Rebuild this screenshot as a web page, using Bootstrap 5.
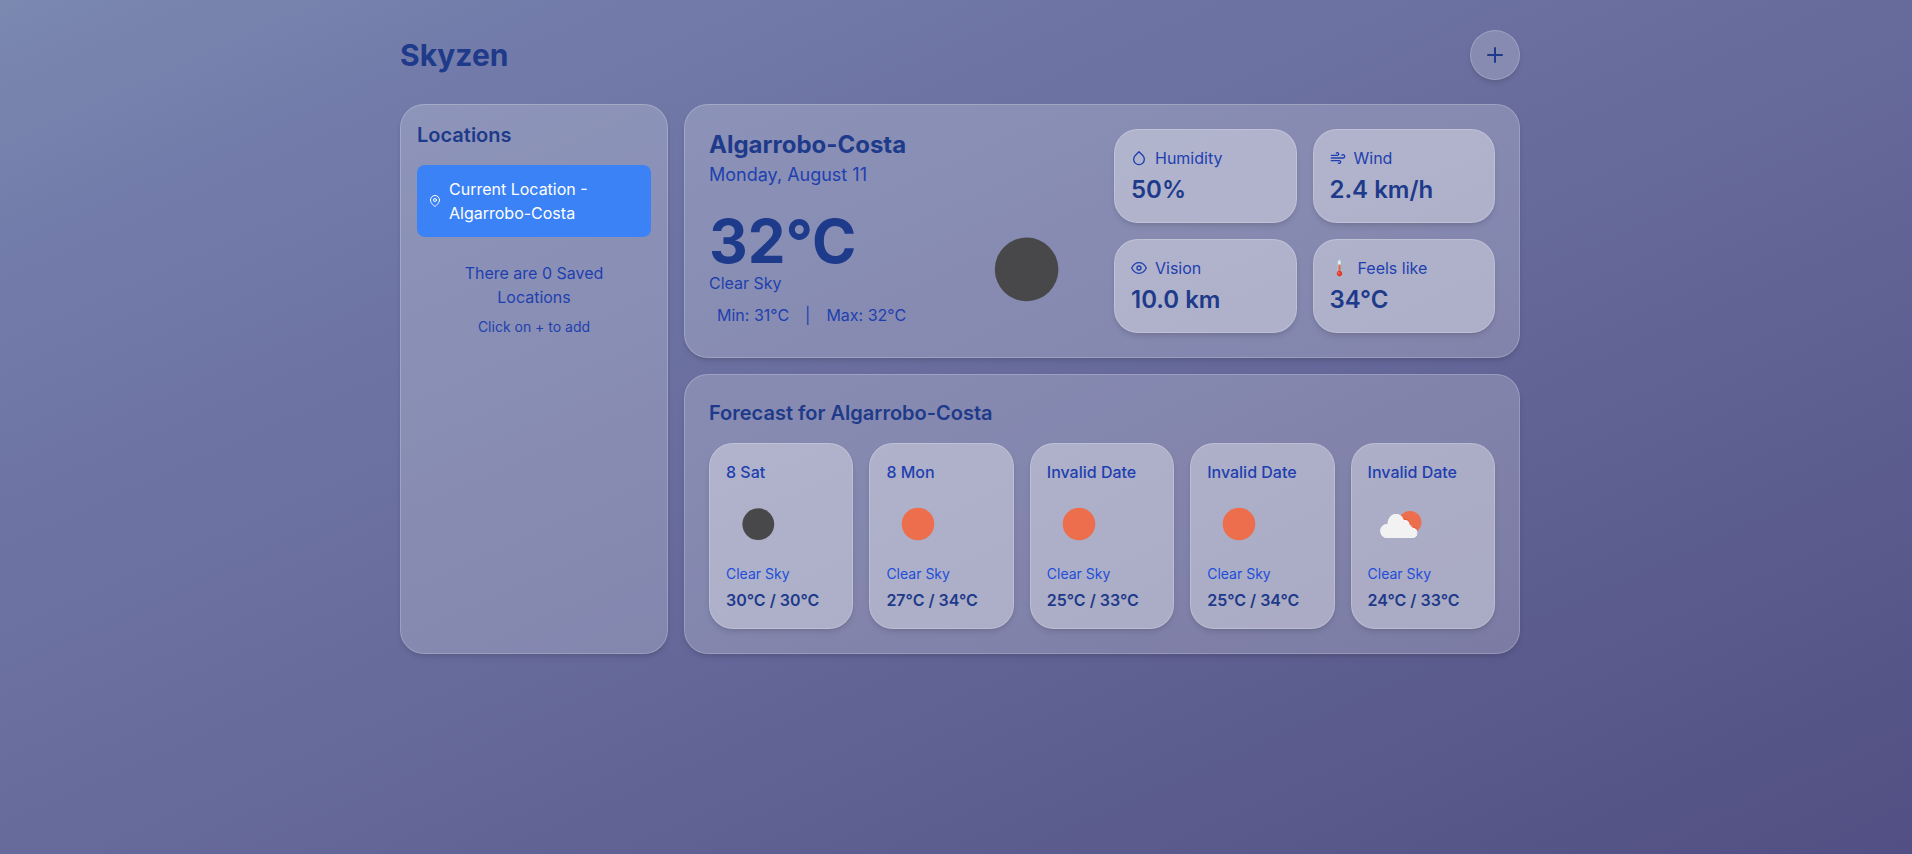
<!DOCTYPE html>
<html lang="en">
<head>
<meta charset="utf-8">
<meta name="viewport" content="width=device-width, initial-scale=1">
<title>Skyzen</title>
<link href="https://cdn.jsdelivr.net/npm/bootstrap@5.3.0/dist/css/bootstrap.min.css" rel="stylesheet">
<style>
  :root { --ink: #1e3a8a; --ink-mid: #1e40af; --ink-soft: #1d4ed8; }
  body {
    font-family: Inter, "Liberation Sans", sans-serif;
    color: var(--ink);
    background: linear-gradient(to bottom right, #7b88b0 0%, #727ba9 16%, #676b9c 50%, #514f83 100%) no-repeat fixed;
    min-height: 100vh;
    padding-left: 8px;
  }
  .shell { max-width: 1152px; padding: 30px 16px 24px; }
  .brand { font-size: 30px; line-height: 36px; font-weight: 700; }
  .glass {
    background: rgba(255,255,255,.2);
    border: 1px solid rgba(255,255,255,.2);
    border-radius: 24px;
    box-shadow: 0 4px 6px -1px rgba(0,0,0,.1), 0 2px 4px -2px rgba(0,0,0,.1);
  }
  .glass-inner {
    background: rgba(255,255,255,.35);
    border: 1px solid rgba(255,255,255,.2);
    border-radius: 24px;
    padding: 16px;
    box-shadow: 0 4px 6px -1px rgba(0,0,0,.1), 0 2px 4px -2px rgba(0,0,0,.1);
  }
  .add-btn { width: 50px; height: 50px; color: var(--ink); }
  .section-title { font-size: 20px; line-height: 28px; font-weight: 600; }
  .place { font-size: 24px; line-height: 32px; font-weight: 700; }
  .today { font-size: 18px; line-height: 28px; color: var(--ink-mid); }
  .temp { font-size: 60px; line-height: 60px; font-weight: 700; }
  .mid { color: var(--ink-mid); }
  .soft { color: var(--ink-soft); }
  .text-14 { font-size: 14px; line-height: 20px; }
  .stat { font-size: 24px; line-height: 32px; font-weight: 600; }
  .loc-btn { background: #3b82f6; color: #fff; border: 0; border-radius: 8px; padding: 12px; }
  .line { fill: none; stroke: currentColor; stroke-width: 2; stroke-linecap: round; stroke-linejoin: round; flex-shrink: 0; }
</style>
</head>
<body>
<svg class="d-none" aria-hidden="true">
  <symbol id="moon" viewBox="0 0 64 64"><circle cx="32.300" cy="32.200" r="15.900" fill="#48484a"/></symbol>
  <symbol id="sun" viewBox="0 0 64 64"><circle cx="32" cy="32" r="16.300" fill="#ec6e4c"/></symbol>
  <symbol id="cloud-sun" viewBox="0 0 64 64">
    <circle cx="42" cy="30.300" r="11.400" fill="#ec6e4c"/>
    <path d="M18.700 46a7 7 0 0 1 .9-14c.3-5.600 3.500-10 8.400-10 3.500 0 6.300 2 7.500 5.800 2.800-.7 6 1 6.300 4.400 1.800.5 2.600 1.800 2.700 3.300A5.300 5.300 0 0 1 44.500 46z" fill="#f2f2f2"/>
    <path d="M19 46a7 7 0 1 1 .7-14c.3-5.600 3.500-10 8.300-10 3.500 0 6.300 2 7.500 5.800 2.800-.6 5.700 1 6.200 4.200.3 1.500 1.300 2.800 2.800 3.500a5.300 5.300 0 0 1 .5 10.500z" fill="#f2f2f2"/>
    <path d="M35.800 27.500c2.800-.6 5.700 1 6.200 4.200.3 1.500 1.300 2.600 2.800 3.300 1.700.2 3 1 3.700 2.300" fill="none" stroke="#e5532f" stroke-width=".9"/>
  </symbol>
</svg>

<div class="shell mx-auto">
  <header class="d-flex justify-content-between align-items-center mb-4">
    <h1 class="brand mb-0">Skyzen</h1>
    <button type="button" class="glass add-btn rounded-circle d-flex align-items-center justify-content-center p-0" aria-label="Add location">
      <svg class="line" width="24" height="24" viewBox="0 0 24 24"><path d="M5 12h14M12 5v14"/></svg>
    </button>
  </header>

  <div class="row g-3">
    <aside class="col-12 col-lg-3">
      <div class="glass p-3 h-100">
        <h2 class="section-title mb-3">Locations</h2>
        <button type="button" class="loc-btn w-100 d-flex align-items-center gap-2 text-start">
          <svg class="line" width="12" height="12" viewBox="0 0 24 24" overflow="visible"><path d="M21 10c0 7-9 13-9 13s-9-6-9-13a9 9 0 0 1 18 0z"/><circle cx="12" cy="10" r="3"/></svg>
          <span>Current Location - Algarrobo-Costa</span>
        </button>
        <div class="mid text-center mt-4 px-3">
          <p class="mb-2">There are 0 Saved Locations</p>
          <p class="text-14 mb-0">Click on + to add</p>
        </div>
      </div>
    </aside>

    <main class="col-12 col-lg-9 d-flex flex-column gap-3">
      <section class="glass p-4">
        <div class="row g-4">
          <div class="col-12 col-md-6">
            <h2 class="place mb-0">Algarrobo-Costa</h2>
            <p class="today mb-3">Monday, August 11</p>
            <div class="d-flex justify-content-between align-items-center">
              <div>
                <div class="temp">32°C</div>
                <div class="mid">Clear Sky</div>
                <div class="mid d-flex mt-2">
                  <span class="px-2">Min: 31°C</span><span class="px-2">|</span><span class="px-2">Max: 32°C</span>
                </div>
              </div>
              <svg width="128" height="128" role="img" aria-label="Clear sky, night"><use href="#moon"/></svg>
            </div>
          </div>
          <div class="col-12 col-md-6">
            <div class="row g-3">
              <div class="col-6"><div class="glass-inner">
                <div class="mid d-flex align-items-center gap-2 mb-1">
                  <svg class="line" width="16" height="16" viewBox="0 0 24 24"><path d="M12 2.690l5.660 5.660a8 8 0 1 1-11.310 0z"/></svg>
                  <span>Humidity</span>
                </div>
                <div class="stat">50%</div>
              </div></div>
              <div class="col-6"><div class="glass-inner">
                <div class="mid d-flex align-items-center gap-2 mb-1">
                  <svg class="line" width="16" height="16" viewBox="0 0 24 24"><path d="M9.590 4.590A2 2 0 1 1 11 8H2m10.590 11.410A2 2 0 1 0 14 16H2m15.730-8.270A2.500 2.500 0 1 1 19.500 12H2"/></svg>
                  <span>Wind</span>
                </div>
                <div class="stat">2.4 km/h</div>
              </div></div>
              <div class="col-6"><div class="glass-inner">
                <div class="mid d-flex align-items-center gap-2 mb-1">
                  <svg class="line" width="16" height="16" viewBox="0 0 24 24"><path d="M1 12s4-8 11-8 11 8 11 8-4 8-11 8-11-8-11-8z"/><circle cx="12" cy="12" r="3"/></svg>
                  <span>Vision</span>
                </div>
                <div class="stat">10.0 km</div>
              </div></div>
              <div class="col-6"><div class="glass-inner">
                <div class="mid d-flex align-items-center gap-2 mb-1">
                  <svg width="20" height="20" viewBox="-1 0 20 20" aria-hidden="true">
                    <path d="M6.200 3.500a2.300 2.300 0 0 1 4.600 0v9.300a3.700 3.700 0 1 1-4.600 0z" fill="#a9c5cb"/>
                    <path d="M7.200 3.700a1.300 1.300 0 0 1 2.600 0V8H7.200z" fill="#e9eef0"/>
                    <path d="M7.400 6.500h2.200v7H7.400z" fill="#e0685a"/>
                    <circle cx="8.500" cy="15.600" r="2.800" fill="#e23b34"/>
                    <path d="M9.700 4h1.200M9.700 6h1.200M9.700 8h1.200M9.700 10h1.200" stroke="#7d8c93" stroke-width=".6"/>
                    <circle cx="7.700" cy="14.900" r=".7" fill="#f6a39b"/>
                  </svg>
                  <span>Feels like</span>
                </div>
                <div class="stat">34°C</div>
              </div></div>
            </div>
          </div>
        </div>
      </section>

      <section class="glass p-4">
        <h2 class="section-title mb-3">Forecast for Algarrobo-Costa</h2>
        <div class="row row-cols-2 row-cols-md-5 g-3">
          <div class="col"><div class="glass-inner">
            <div class="mid fw-medium mb-2">8 Sat</div>
            <svg class="d-block mb-2" width="64" height="64"><use href="#moon"/></svg>
            <div class="soft text-14 mb-1">Clear Sky</div>
            <div class="fw-semibold">30°C / 30°C</div>
          </div></div>
          <div class="col"><div class="glass-inner">
            <div class="mid fw-medium mb-2">8 Mon</div>
            <svg class="d-block mb-2" width="64" height="64"><use href="#sun"/></svg>
            <div class="soft text-14 mb-1">Clear Sky</div>
            <div class="fw-semibold">27°C / 34°C</div>
          </div></div>
          <div class="col"><div class="glass-inner">
            <div class="mid fw-medium mb-2">Invalid Date</div>
            <svg class="d-block mb-2" width="64" height="64"><use href="#sun"/></svg>
            <div class="soft text-14 mb-1">Clear Sky</div>
            <div class="fw-semibold">25°C / 33°C</div>
          </div></div>
          <div class="col"><div class="glass-inner">
            <div class="mid fw-medium mb-2">Invalid Date</div>
            <svg class="d-block mb-2" width="64" height="64"><use href="#sun"/></svg>
            <div class="soft text-14 mb-1">Clear Sky</div>
            <div class="fw-semibold">25°C / 34°C</div>
          </div></div>
          <div class="col"><div class="glass-inner">
            <div class="mid fw-medium mb-2">Invalid Date</div>
            <svg class="d-block mb-2" width="64" height="64"><use href="#cloud-sun"/></svg>
            <div class="soft text-14 mb-1">Clear Sky</div>
            <div class="fw-semibold">24°C / 33°C</div>
          </div></div>
        </div>
      </section>
    </main>
  </div>
</div>
<script src="https://cdn.jsdelivr.net/npm/bootstrap@5.3.0/dist/js/bootstrap.bundle.min.js"></script>
</body>
</html>
